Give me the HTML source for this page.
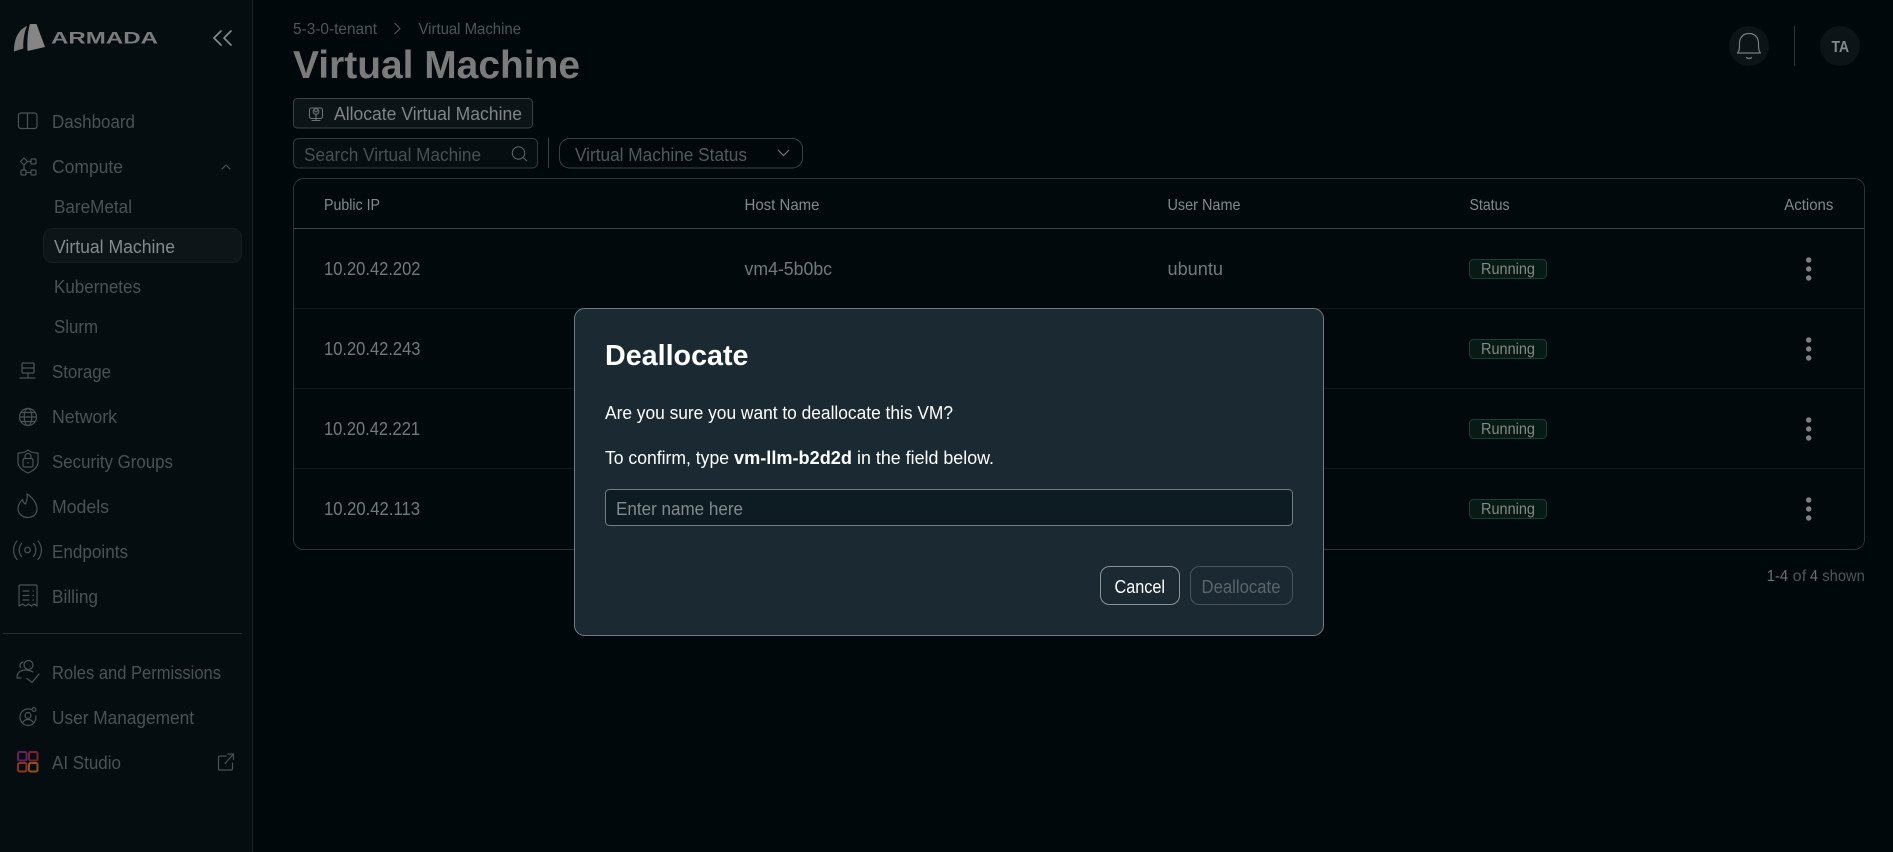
<!DOCTYPE html>
<html lang="en">
<head>
<meta charset="utf-8">
<title>Virtual Machine</title>
<style>
html,body{margin:0;padding:0;width:1893px;height:852px;overflow:hidden;background:#01080c}
svg{display:block;position:absolute;left:0;top:0}
text{font-family:"Liberation Sans",sans-serif;white-space:pre}
.nav{font-size:18px;fill:#4c5154}
.th{font-size:16px;fill:#85898b}
.td{font-size:18px;fill:#74787a}
.run{font-size:16px;fill:#7f8a83}
.ic{fill:none;stroke:#4c5154;stroke-width:1.2;stroke-linecap:round;stroke-linejoin:round}
.ft{font-size:16px;fill:#4f5558}
.ftb{font-size:16px;fill:#6a7073}
</style>
</head>
<body>
<svg width="1893" height="852" viewBox="0 0 1893 852" xmlns="http://www.w3.org/2000/svg">
<defs>
<g id="dots" fill="#808080"><circle cx="1808.7" cy="-9" r="2.7"/><circle cx="1808.7" cy="0" r="2.7"/><circle cx="1808.7" cy="9" r="2.7"/></g>
</defs>

<rect width="1893" height="852" fill="#01080c"/>

<!-- Sidebar -->
<rect width="252" height="852" fill="#050d11"/>
<rect x="252" width="1" height="852" fill="#1e2528"/>

<path d="M14 51.500 C14 39 18 30 27 26 C24 33 23 41 23.300 48.500 Z" fill="#7a7a7a"/>
<path d="M30 24 L36.500 24 L45 47 L27.500 51 C27 42 27.500 32 30 24 Z" fill="#858585"/>
<text x="51" y="43.500" font-size="17" font-weight="700" fill="#7c7c7c" textLength="107" lengthAdjust="spacingAndGlyphs">ARMADA</text>
<path d="M221 31 L214 38 L221 45 M231 31 L224 38 L231 45" fill="none" stroke="#83888a" stroke-width="1.700" stroke-linecap="round" stroke-linejoin="round"/>

<rect x="18.500" y="113" width="18.500" height="15.500" rx="2.500" class="ic"/><path d="M27.500 113V128.500" class="ic"/>
<text class="nav" x="52" y="128" textLength="83" lengthAdjust="spacingAndGlyphs">Dashboard</text>

<path d="M24 158 L27.500 161.500 L24 165 L20.500 161.500 Z" class="ic"/>
<rect x="31" y="159" width="5" height="5" rx="1" class="ic"/><rect x="21" y="170" width="5" height="5" rx="1" class="ic"/><rect x="31" y="170" width="5" height="5" rx="1" class="ic"/>
<path d="M27.500 161.500H31M26 172.500H31M24 165V170" class="ic"/>
<text class="nav" x="52" y="173" textLength="71" lengthAdjust="spacingAndGlyphs">Compute</text>
<path d="M222 169 L226 165 L230 169" class="ic"/>

<text class="nav" x="54" y="213" textLength="78" lengthAdjust="spacingAndGlyphs">BareMetal</text>
<rect x="43.500" y="228.500" width="198" height="34" rx="9" fill="#0d1519" stroke="#161e22"/>
<text x="54" y="253" font-size="18" fill="#858b8f" textLength="121" lengthAdjust="spacingAndGlyphs">Virtual Machine</text>
<text class="nav" x="54" y="293" textLength="87" lengthAdjust="spacingAndGlyphs">Kubernetes</text>
<text class="nav" x="54" y="333" textLength="44" lengthAdjust="spacingAndGlyphs">Slurm</text>

<rect x="22" y="363" width="12" height="10" rx="1" class="ic"/><path d="M22 368H34M28 373V378M20 378H35" class="ic"/>
<text class="nav" x="52" y="378" textLength="59" lengthAdjust="spacingAndGlyphs">Storage</text>

<circle cx="28" cy="417" r="8.500" class="ic"/><ellipse cx="28" cy="417" rx="3.800" ry="8.500" class="ic"/><path d="M19.500 417H36.500M21 412.500H35M21 421.500H35" class="ic"/>
<text class="nav" x="52" y="423" textLength="65" lengthAdjust="spacingAndGlyphs">Network</text>

<path d="M18 453 C23 453 26 452 28 450 C30 452 33 453 38 453 V462 C38 467 33 471 28 473 C23 471 18 467 18 462 Z" class="ic"/>
<rect x="23" y="458.500" width="10" height="8.500" rx="1.500" class="ic"/><path d="M25 458.500V456.500C25 452.500 31 452.500 31 456.500V458.500" class="ic"/><circle cx="28" cy="462.800" r=".8" fill="#4f5457"/>
<text class="nav" x="52" y="468" textLength="121" lengthAdjust="spacingAndGlyphs">Security Groups</text>

<path d="M28 517.500 C22 517.500 18 513.500 18 508.500 C18 504.500 20.500 501.500 22.500 499.500 C23 502 24 503.500 25.500 504 C27 500.500 27.500 496.500 27 494 C32 497 37 503 37 509 C37 514 33 517.500 28 517.500 Z" class="ic"/>
<text class="nav" x="52" y="513" textLength="57" lengthAdjust="spacingAndGlyphs">Models</text>

<circle cx="27.500" cy="550" r="2.800" class="ic"/>
<path d="M21.500 543.500C18.500 547 18.500 553 21.500 556.500M33.500 543.500C36.500 547 36.500 553 33.500 556.500M17 541C12.500 546 12.500 554 17 559.500M38 541C42.500 546 42.500 554 38 559.500" class="ic"/>
<text class="nav" x="52" y="558" textLength="76" lengthAdjust="spacingAndGlyphs">Endpoints</text>

<path d="M19 606 V586 Q19 585 20 585 H36 Q37 585 37 586 V606 L34 604 L31.500 606 L28.500 604 L25.500 606 L22.500 604 Z" class="ic"/>
<path d="M23 591H29M23 595.500H29M23 600H29M33 591H33.500M33 595.500H33.500M33 600H33.500" class="ic"/>
<text class="nav" x="52" y="603" textLength="46" lengthAdjust="spacingAndGlyphs">Billing</text>

<rect x="3" y="633" width="239" height="1" fill="#272e31"/>

<circle cx="28.500" cy="665" r="4.500" class="ic"/>
<path d="M23 662C20 663 19 666 21 668M17 678C17 673 20 670 26 670C29 670 31 671 33 672M21 678H17M27 678.500L32 682.500L39 674" class="ic"/>
<text class="nav" x="52" y="679" textLength="169" lengthAdjust="spacingAndGlyphs">Roles and Permissions</text>

<path d="M31 709.500C26 707.500 20 711 20 717C20 722 24 725.500 28 725.500C33 725.500 36.500 721 35.800 716" class="ic"/>
<circle cx="28" cy="715.500" r="3" class="ic"/><path d="M22.500 723C23.500 720.500 25.500 719.500 28 719.500C30.500 719.500 32.500 720.500 33.500 723" class="ic"/><circle cx="34" cy="709.500" r="1.900" class="ic"/>
<text class="nav" x="52" y="724" textLength="142" lengthAdjust="spacingAndGlyphs">User Management</text>

<g fill="none" stroke-width="2">
<rect x="18" y="752" width="8.500" height="8.500" rx="1.500" stroke="#66205a"/>
<rect x="29" y="752" width="8.500" height="8.500" rx="1.500" stroke="#7a2030"/>
<rect x="18" y="763" width="8.500" height="8.500" rx="1.500" stroke="#8c321e"/>
<rect x="29" y="763" width="8.500" height="8.500" rx="1.500" stroke="#8c521c"/>
</g>
<text class="nav" x="52" y="769" textLength="69" lengthAdjust="spacingAndGlyphs">AI Studio</text>
<path d="M226 756H220Q218.500 756 218.500 757.500V768.500Q218.500 770 220 770H231Q232.500 770 232.500 768.500V763M225 763.500L233.500 754M228 754H233.500V759.500" class="ic"/>

<!-- Header -->
<text x="293" y="34" font-size="16" fill="#4f5558" textLength="84" lengthAdjust="spacingAndGlyphs">5-3-0-tenant</text>
<path d="M394.500 23L400 28.500L394.500 34" fill="none" stroke="#4f5558" stroke-width="1.100"/>
<text x="418.500" y="34" font-size="16" fill="#4f5558" textLength="102.500" lengthAdjust="spacingAndGlyphs">Virtual Machine</text>
<text x="293" y="78" font-size="39" font-weight="700" fill="#7b7b7b" textLength="287" lengthAdjust="spacingAndGlyphs">Virtual Machine</text>

<circle cx="1749" cy="46" r="20" fill="#0c1417"/>
<path d="M1737.500 53C1739.500 51 1739.500 48.500 1739.500 43.500C1739.500 37 1743.500 33.500 1749 33.500C1754.500 33.500 1758.500 37 1758.500 43.500C1758.500 48.500 1758.500 51 1760.500 53Z" fill="none" stroke="#7a7d7f" stroke-width="1.200" stroke-linejoin="round"/>
<path d="M1746.500 57.500Q1749 59.500 1751.500 57.500" fill="none" stroke="#7a7d7f" stroke-width="1.200" stroke-linecap="round"/>
<rect x="1794" y="26" width="1" height="40" fill="#2f3639"/>
<circle cx="1840" cy="46" r="20" fill="#0c1417"/>
<text x="1831.500" y="52" font-size="16" font-weight="700" fill="#85898b" textLength="17.500" lengthAdjust="spacingAndGlyphs">TA</text>

<!-- Toolbar -->
<rect x="293.500" y="98.500" width="239" height="29.500" rx="4" fill="#0d1417" stroke="#3b4245"/>
<g fill="none" stroke="#6b7073" stroke-width="1.100" stroke-linecap="round" stroke-linejoin="round">
<rect x="309.500" y="108" width="13" height="10.500" rx="2"/><circle cx="316" cy="111.500" r="2.800"/><path d="M316 114V120M312 120.500H320M313.500 110L316 112L318.500 110"/>
</g>
<text x="334" y="120" font-size="18" fill="#7f8486" textLength="188" lengthAdjust="spacingAndGlyphs">Allocate Virtual Machine</text>

<rect x="293.500" y="138.500" width="244" height="29.500" rx="5" fill="#060e12" stroke="#33393c"/>
<text x="304" y="161" font-size="18" fill="#4a4f52" textLength="177" lengthAdjust="spacingAndGlyphs">Search Virtual Machine</text>
<circle cx="518.500" cy="153" r="6.200" fill="none" stroke="#5b6063" stroke-width="1.100"/><path d="M523 157.500L527 161" stroke="#5b6063" stroke-width="1.100" fill="none"/>
<rect x="548" y="138" width="1" height="30" fill="#3c4245"/>
<rect x="559.500" y="138.500" width="243" height="29.500" rx="10" fill="#01080c" stroke="#3a4043"/>
<text x="575" y="161" font-size="18" fill="#54595c" textLength="172" lengthAdjust="spacingAndGlyphs">Virtual Machine Status</text>
<path d="M778 150L783.500 155.500L789 150" fill="none" stroke="#74787a" stroke-width="1.200"/>

<!-- Table -->
<rect x="293.500" y="178.500" width="1571" height="371" rx="10" fill="#01090d" stroke="#2d3336"/>
<rect x="294" y="228" width="1570" height="1" fill="#3f4548"/>
<rect x="294" y="308" width="1570" height="1" fill="#10181c"/>
<rect x="294" y="388" width="1570" height="1" fill="#10181c"/>
<rect x="294" y="468" width="1570" height="1" fill="#10181c"/>

<text class="th" x="324" y="210" textLength="56" lengthAdjust="spacingAndGlyphs">Public IP</text>
<text class="th" x="744.500" y="210" textLength="75" lengthAdjust="spacingAndGlyphs">Host Name</text>
<text class="th" x="1167.500" y="210" textLength="73" lengthAdjust="spacingAndGlyphs">User Name</text>
<text class="th" x="1469.500" y="210" textLength="40" lengthAdjust="spacingAndGlyphs">Status</text>
<text class="th" x="1784.300" y="210" textLength="49" lengthAdjust="spacingAndGlyphs">Actions</text>

<text class="td" x="324" y="275" textLength="96.500" lengthAdjust="spacingAndGlyphs">10.20.42.202</text>
<text class="td" x="744.500" y="275" textLength="87.500" lengthAdjust="spacingAndGlyphs">vm4-5b0bc</text>
<text class="td" x="1167.500" y="275" textLength="55.500" lengthAdjust="spacingAndGlyphs">ubuntu</text>
<text class="td" x="324" y="355" textLength="96.500" lengthAdjust="spacingAndGlyphs">10.20.42.243</text>
<text class="td" x="324" y="435" textLength="96" lengthAdjust="spacingAndGlyphs">10.20.42.221</text>
<text class="td" x="324" y="515" textLength="96" lengthAdjust="spacingAndGlyphs">10.20.42.113</text>

<g fill="#081a16" stroke="#17402f">
<rect x="1469.500" y="259.500" width="77" height="19" rx="4"/>
<rect x="1469.500" y="339.500" width="77" height="19" rx="4"/>
<rect x="1469.500" y="419.500" width="77" height="19" rx="4"/>
<rect x="1469.500" y="499.500" width="77" height="19" rx="4"/>
</g>
<text class="run" x="1481" y="274" textLength="54" lengthAdjust="spacingAndGlyphs">Running</text>
<text class="run" x="1481" y="354" textLength="54" lengthAdjust="spacingAndGlyphs">Running</text>
<text class="run" x="1481" y="434" textLength="54" lengthAdjust="spacingAndGlyphs">Running</text>
<text class="run" x="1481" y="514" textLength="54" lengthAdjust="spacingAndGlyphs">Running</text>

<use href="#dots" y="269"/><use href="#dots" y="349"/><use href="#dots" y="429"/><use href="#dots" y="509"/>

<text class="ftb" x="1766.700" y="581" textLength="21.500" lengthAdjust="spacingAndGlyphs">1-4</text>
<text class="ft" x="1792.700" y="581" textLength="13.500" lengthAdjust="spacingAndGlyphs">of</text>
<text class="ftb" x="1810" y="581" textLength="8" lengthAdjust="spacingAndGlyphs">4</text>
<text class="ft" x="1822.300" y="581" textLength="42.500" lengthAdjust="spacingAndGlyphs">shown</text>

<!-- Modal -->
<rect x="574.500" y="308.500" width="749" height="327" rx="10" fill="#1b2a32" stroke="#727b80"/>
<text x="605" y="365" font-size="29" font-weight="700" fill="#ffffff" textLength="143.500" lengthAdjust="spacingAndGlyphs">Deallocate</text>
<text x="605" y="419" font-size="18" fill="#ffffff" textLength="348" lengthAdjust="spacingAndGlyphs">Are you sure you want to deallocate this VM?</text>
<text x="605" y="464" font-size="18" fill="#ffffff" textLength="124" lengthAdjust="spacingAndGlyphs">To confirm, type</text>
<text x="734" y="464" font-size="18" font-weight="700" fill="#ffffff" textLength="118" lengthAdjust="spacingAndGlyphs">vm-llm-b2d2d</text>
<text x="857" y="464" font-size="18" fill="#ffffff" textLength="137" lengthAdjust="spacingAndGlyphs">in the field below.</text>
<rect x="605.500" y="489.500" width="687" height="36" rx="4" fill="#0d1b22" stroke="#757c80"/>
<text x="616" y="515" font-size="18" fill="#838a8e" textLength="127" lengthAdjust="spacingAndGlyphs">Enter name here</text>
<rect x="1100.500" y="566.500" width="79" height="38" rx="9" fill="#1b2a32" stroke="#8b9397"/>
<text x="1114.500" y="593" font-size="18" fill="#ffffff" textLength="50.500" lengthAdjust="spacingAndGlyphs">Cancel</text>
<rect x="1190.500" y="566.500" width="102" height="38" rx="9" fill="#1b2a32" stroke="#48545a"/>
<text x="1201.500" y="593" font-size="18" fill="#5a656a" textLength="79" lengthAdjust="spacingAndGlyphs">Deallocate</text>
</svg>
</body>
</html>
